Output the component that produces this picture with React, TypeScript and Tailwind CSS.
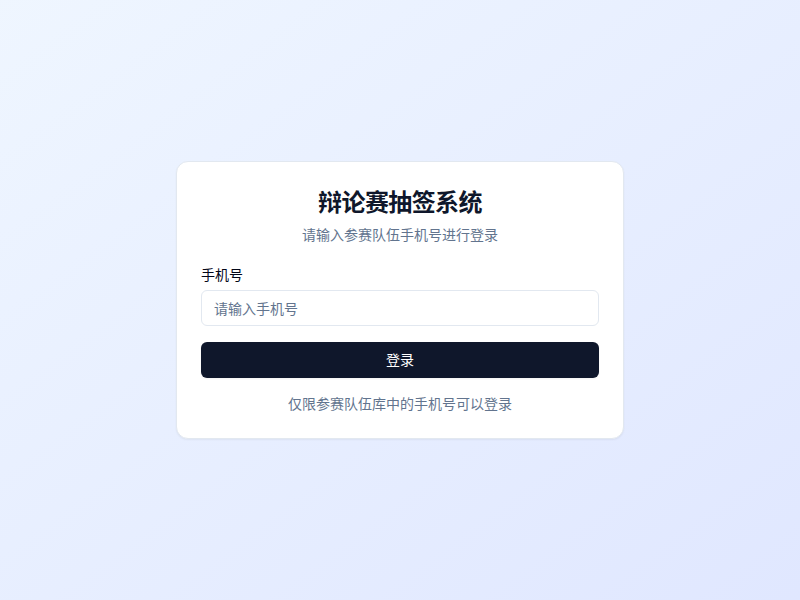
import React, { useState } from 'react';

const App: React.FC = () => {
  const [phone, setPhone] = useState('');

  return (
    <div
      className="min-h-screen w-full flex items-center justify-center bg-gradient-to-br from-blue-50 to-indigo-100 p-4"
      style={{ fontFamily: '"Inter", "Noto Sans CJK SC", sans-serif' }}
    >
      <div className="w-full max-w-md rounded-xl border border-slate-200 bg-white text-slate-900 shadow-xs">
        {/* Header */}
        <div className="flex flex-col items-center space-y-1.5 px-6 pt-[25px] pb-[23px] text-center">
          <h1 className="text-2xl font-bold tracking-tight text-slate-900">辩论赛抽签系统</h1>
          <p className="text-sm text-slate-500">请输入参赛队伍手机号进行登录</p>
        </div>

        {/* Form */}
        <div className="px-6 pb-6">
          <form className="space-y-4" onSubmit={(e) => e.preventDefault()}>
            <div className="space-y-2">
              <label htmlFor="phone" className="block text-sm font-normal leading-none text-slate-950">
                手机号
              </label>
              <input
                id="phone"
                type="tel"
                value={phone}
                onChange={(e) => setPhone(e.target.value)}
                placeholder="请输入手机号"
                className="flex h-9 w-full rounded-md border border-slate-200 bg-white px-3 text-sm text-slate-900 placeholder:text-slate-500 outline-none"
              />
            </div>
            <button
              type="submit"
              className="flex h-9 w-full items-center justify-center rounded-md bg-slate-900 text-sm font-normal text-white shadow-xs"
            >
              登录
            </button>
          </form>
          <p className="mt-4 text-center text-sm text-slate-500">仅限参赛队伍库中的手机号可以登录</p>
        </div>
      </div>
    </div>
  );
};

export default App;
